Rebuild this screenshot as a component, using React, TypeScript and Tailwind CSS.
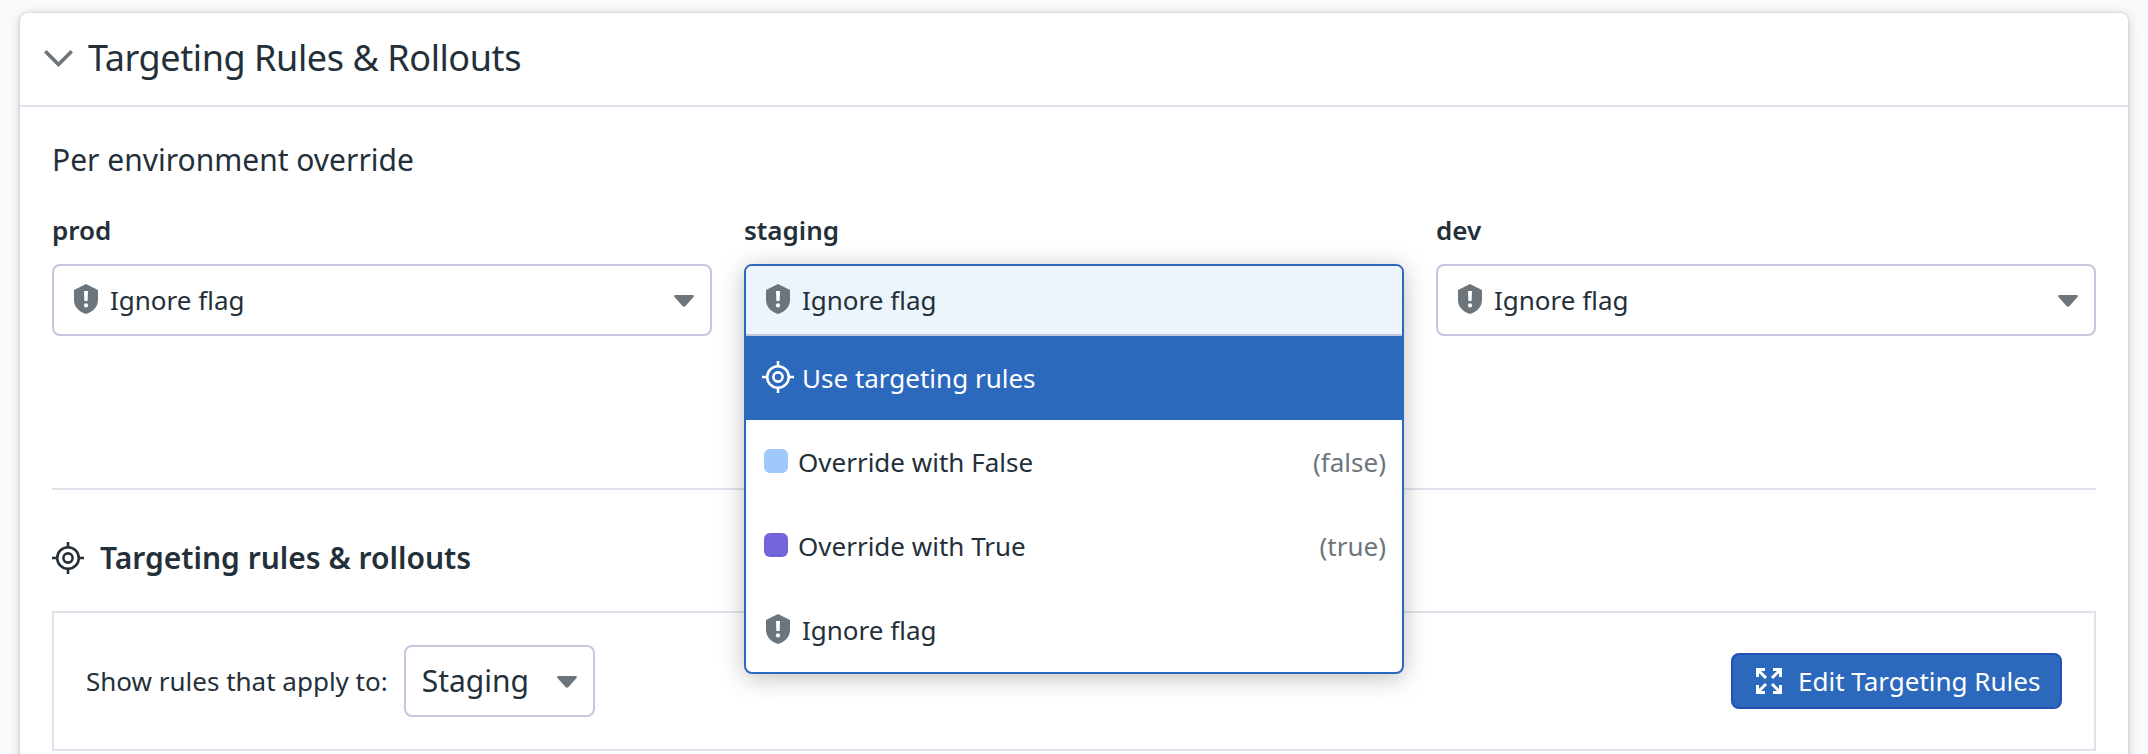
import type { ReactNode } from "react";

function ShieldIcon() {
  return (
    <svg viewBox="0 0 24 30" className="h-[30px] w-6 shrink-0">
      <path d="M12 0L24 6V16C24 22.5 19.5 27.5 12 30C4.500 27.5 0 22.5 0 16V6Z" fill="#6c757b" />
      <path d="M10 7h4l-.4 10h-3.200z" fill="#fff" />
      <circle cx="12" cy="21.400" r="2.100" fill="#fff" />
    </svg>
  );
}

function TargetIcon() {
  return (
    <svg viewBox="0 0 32 32" fill="none" stroke="currentColor" strokeWidth="2.600" className="size-8 shrink-0">
      <circle cx="16" cy="16" r="10.800" />
      <circle cx="16" cy="16" r="4.600" />
      <path d="M16 0v5M16 27v5M0 16h5M27 16h5" />
    </svg>
  );
}

function Caret() {
  return (
    <svg viewBox="0 0 20 12" className="mt-0.5 h-3 w-5 shrink-0">
      <path d="M1 0h18q1.500.5.5 2l-8 9q-1.500 1.500-3 0l-8-9q-1-1.500.5-2z" fill="#6c757b" />
    </svg>
  );
}

function ExpandIcon() {
  return (
    <svg viewBox="0 0 26 26" className="size-[26px] shrink-0" fill="none" stroke="#fff" strokeWidth="3">
      <path d="M1.500 9V1.500H9M17 1.500h7.500V9M24.500 17v7.500H17M9 24.500H1.500V17" />
      <path d="M2 2l8 8M24 2l-8 8M24 24l-8-8M2 24l8-8" />
    </svg>
  );
}

function Select({ children, className }: { children: ReactNode; className: string }) {
  return (
    <div className={`flex h-[72px] items-center justify-between rounded-lg border-2 border-[#c5c7de] bg-white ${className}`}>
      {children}
      <Caret />
    </div>
  );
}

function IgnoreFlag() {
  return (
    <div className="flex items-center gap-3">
      <div className="-mt-0.5">
        <ShieldIcon />
      </div>
      <span>Ignore flag</span>
    </div>
  );
}

function Override({ label, value, swatch }: { label: string; value: string; swatch: string }) {
  return (
    <div className="flex h-[84px] items-center pr-4 pl-[18px]">
      <span className={`-mt-0.5 mr-2.5 size-6 rounded-md ${swatch}`} />
      <span className="flex-1">{label}</span>
      <span className="text-[#6c757b]">{value}</span>
    </div>
  );
}

function Environment({ name, children }: { name: string; children: ReactNode }) {
  return (
    <div className="relative flex flex-col">
      <div className="mb-4 h-9 leading-9 font-semibold">{name}</div>
      {children}
    </div>
  );
}

export default function App() {
  return (
    <div className="h-[754px] overflow-hidden bg-[#f9fafc] px-5 pt-[13px] font-['Noto_Sans',sans-serif] text-[26px] leading-9 text-[#243039]">
      <section className="h-[800px] rounded-lg bg-white shadow-[0_2px_12px_rgba(0,0,0,0.18),0_0_3px_rgba(0,0,0,0.16)]">
        <header className="flex h-[94px] items-center gap-[15px] border-b-2 border-[#e1e3ec] pb-0.5 pl-6">
          <svg viewBox="0 0 29 17" className="h-[17px] w-[29px]" fill="none" stroke="#6c757b" strokeWidth="3.600">
            <path d="M1.300 1.300l13.200 13.200L27.700 1.300" />
          </svg>
          <h1 className="text-[36px] leading-[48px] tracking-[-0.42px]">Targeting Rules &amp; Rollouts</h1>
        </header>
        <div className="px-8 pt-[33px]">
          <h2 className="text-[30px] leading-10">Per environment override</h2>
          <div className="mt-8 grid grid-cols-3 gap-8">
            <Environment name="prod">
              <Select className="pr-4 pl-5">
                <IgnoreFlag />
              </Select>
            </Environment>
            <Environment name="staging">
              <div className="absolute top-[52px] right-0 left-0 z-10 overflow-hidden rounded-lg border-2 border-[#2c69bd] bg-white shadow-[0_4px_24px_rgba(0,0,0,0.25)]">
                <div className="flex h-[70px] items-center border-b-2 border-[#c5c7de] bg-[#ecf5fc] pl-5">
                  <IgnoreFlag />
                </div>
                <div className="flex h-[84px] items-center gap-2 bg-[#2c69bd] pl-4 text-white">
                  <div className="-mt-0.5">
                    <TargetIcon />
                  </div>
                  <span>Use targeting rules</span>
                </div>
                <Override label="Override with False" value="(false)" swatch="bg-[#a0c8fa]" />
                <Override label="Override with True" value="(true)" swatch="bg-[#7264d9]" />
                <div className="flex h-[84px] items-center pl-5">
                  <IgnoreFlag />
                </div>
              </div>
            </Environment>
            <Environment name="dev">
              <Select className="pr-4 pl-5">
                <IgnoreFlag />
              </Select>
            </Environment>
          </div>
          <hr className="mt-[152px] border-t-2 border-[#e1e3ec]" />
          <div className="mt-[48px] flex h-10 items-center gap-4">
            <TargetIcon />
            <h2 className="text-[30px] leading-10 font-semibold">Targeting rules &amp; rollouts</h2>
          </div>
          <div className="mt-[33px] flex h-[140px] items-center border-2 border-[#e1e3ec] pr-8 pl-8">
            <span className="mr-4">Show rules that apply to:</span>
            <Select className="w-[191px] px-4">
              <span className="text-[30px] leading-10">Staging</span>
            </Select>
            <button className="ml-auto flex h-14 w-[331px] items-center gap-4 rounded-lg border-2 border-[#2450b8] bg-[#2c69bd] pl-[23px] text-white">
              <ExpandIcon />
              <span>Edit Targeting Rules</span>
            </button>
          </div>
        </div>
      </section>
    </div>
  );
}
